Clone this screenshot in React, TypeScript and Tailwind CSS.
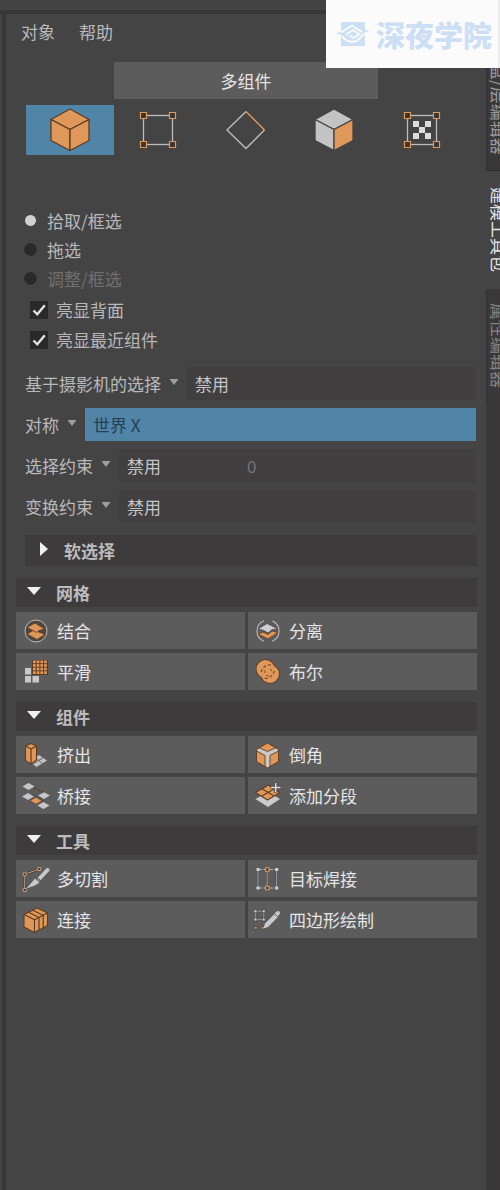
import { useState } from "react";
import type { ReactNode } from "react";

const ORANGE = "#e0985a";
const BROWN = "#5e3c22";
const GREY = "#bdbcbd";

function Cube({ front, side, line }: { front: string; side: string; line: string }) {
  return (
    <svg width="44" height="44" viewBox="0 0 44 44" stroke={line} strokeWidth="1.3" strokeLinejoin="round" aria-hidden="true">
      <path d="M22 1 L41 11.5 L22 21.5 L3 11.5 Z" fill={front} />
      <path d="M3 11.5 L22 21.5 V42.5 L3 32.5 Z" fill={front} />
      <path d="M41 11.5 L22 21.5 V42.5 L41 32.5 Z" fill={side} />
    </svg>
  );
}

function Frame({ checker }: { checker?: boolean }) {
  return (
    <svg width="44" height="44" viewBox="0 0 44 44" aria-hidden="true">
      <rect x="7.5" y="7.5" width="29" height="29" fill="none" stroke={GREY} strokeWidth="1.3" />
      {checker && (
        <path d="M13 13h6v6h-6z M25 13h6v6h-6z M19 19h6v6h-6z M13 25h6v6h-6z M25 25h6v6h-6z" fill="#dcdcdc" />
      )}
      <path
        d="M4.5 4.5h6v6h-6z M33.500 4.500h6v6h-6z M4.500 33.500h6v6h-6z M33.500 33.500h6v6h-6z"
        fill="#3a3432"
        stroke={ORANGE}
        strokeWidth="1.2"
      />
    </svg>
  );
}

function Diamond() {
  return (
    <svg width="44" height="44" viewBox="0 0 44 44" fill="none" strokeWidth="1.4" aria-hidden="true">
      <path d="M22 3.500 L3 22 L22 40.500 L40.500 22" stroke={GREY} />
      <path d="M22 3.500 L40.500 22" stroke={ORANGE} />
    </svg>
  );
}

function ToolSvg({ children }: { children: ReactNode }) {
  return (
    <svg className="shrink-0" width="28" height="28" viewBox="0 0 28 28" fill="none" strokeLinejoin="round" aria-hidden="true">
      {children}
    </svg>
  );
}

const icons = {
  combine: (
    <ToolSvg>
      <circle cx="14" cy="14" r="11" fill="#4d4844" stroke={GREY} strokeWidth="1" />
      <path d="M5 17 L12 13 L23 17.500 L15 22.500 Z" fill={ORANGE} stroke={BROWN} strokeWidth="0.8" />
      <path d="M5 10.500 L13 6 L22.500 12 L17 13.500 L14.500 15.500 L11 13.500 Z" fill={ORANGE} stroke={BROWN} strokeWidth="0.8" />
    </ToolSvg>
  ),
  separate: (
    <ToolSvg>
      <circle cx="14" cy="14" r="11" stroke={GREY} strokeWidth="1.1" strokeDasharray="26 8.560" strokeDashoffset="-21.500" />
      <path d="M4 17 L9 15 L14 17.500 L18 14 L24 15.500 L14 22 Z" fill={ORANGE} stroke={BROWN} strokeWidth="0.8" />
      <path d="M4 12 L13 6.500 L24 12 L18 12.500 L14 16 L10 13.500 Z" fill="#cfcdd2" stroke="#4b4a4b" strokeWidth="0.8" />
    </ToolSvg>
  ),
  smooth: (
    <ToolSvg>
      <path d="M10 2h16v15H10z" fill={BROWN} />
      {[0, 1, 2, 3].map((r) =>
        [0, 1, 2, 3].map((c) => (
          <rect key={`${r}-${c}`} x={11 + c * 3.7} y={2.5 + r * 3.6} width="2.700" height="2.700" fill={ORANGE} />
        )),
      )}
      <path d="M3 10h6v6.500H3z M3 18h6v6.500H3z M10.500 18h6.500v6.500h-6.500z" fill="#c9c8c9" />
    </ToolSvg>
  ),
  boolean: (
    <ToolSvg>
      <g stroke={BROWN} strokeWidth="1.8">
        <circle cx="11.500" cy="11" r="9" />
        <circle cx="16" cy="16" r="9" />
      </g>
      <circle cx="11.500" cy="11" r="9" fill={ORANGE} />
      <circle cx="16" cy="16" r="9" fill={ORANGE} />
      <path d="M20.300 13 A9 9 0 0 1 9 20 M7.200 14 A9 9 0 0 1 18.500 7.200" stroke="#7a4a25" strokeWidth="1.300" strokeDasharray="3 2" />
      <path d="M11 12v3 M16 11l2 2 M12 17l3 1" stroke="#96602f" strokeWidth="1.200" />
    </ToolSvg>
  ),
  extrude: (
    <ToolSvg>
      <path d="M7 20 L17 14 L25 19.500 L14.500 26 Z" fill="#c3c2c3" />
      <path d="M11 23 L21 16.800 M15.500 18 L20 22.500" stroke="#5b5a5b" strokeWidth="1" />
      <path d="M3.500 5 L9 2.500 L14.500 5 V19 L9 23 L3.500 19.500 Z" fill={ORANGE} stroke={BROWN} strokeWidth="1.1" />
      <path d="M3.500 5 L9 8 L14.500 5 M9 8 V23" stroke={BROWN} strokeWidth="1.2" />
    </ToolSvg>
  ),
  bridge: (
    <ToolSvg>
      <path d="M12 6 L22 10.500" stroke={BROWN} strokeWidth="1.3" strokeDasharray="2.500 1.500" />
      <path d="M9 12 L23 20" stroke="#4a4340" strokeWidth="1" />
      <g fill="#c6c6c8">
        <path d="M0.500 4.500 L6.500 1 L12.500 4.500 L6.500 8 Z" />
        <path d="M0 14.500 L6 11 L12 14.500 L6 18 Z" />
        <path d="M16 13.500 L22 10.300 L28 13.500 L22 17 Z" />
        <path d="M15.500 23.500 L21.500 20 L27.500 23.500 L21.500 27 Z" />
      </g>
      <path d="M8 18.700 L14 15.200 L20 18.700 L14 22.200 Z" fill={ORANGE} stroke={BROWN} strokeWidth="0.600" />
    </ToolSvg>
  ),
  bevel: (
    <ToolSvg>
      <path d="M13.500 2 L24.500 8.500 V20.500 L13.500 27 L2.500 20.500 V8.500 Z" fill="#c9c7c6" stroke={BROWN} strokeWidth="1" />
      <g fill={ORANGE} stroke={BROWN} strokeWidth="0.900">
        <path d="M13.500 2 L21.500 6.800 L13.500 10.500 L5.500 6.800 Z" />
        <path d="M2.500 10 L11 14.500 V25.500 L2.500 20.500 Z" />
        <path d="M24.500 10 L16 14.500 V25.500 L24.500 20.500 Z" />
      </g>
    </ToolSvg>
  ),
  addDivisions: (
    <ToolSvg>
      <path d="M1.500 17 L14 10 L26 17 L14 25 Z" fill="#cbcbcc" />
      <path d="M1.500 10.500 L14.500 3 L26 10.500 L13.500 18 Z" fill={ORANGE} stroke={BROWN} strokeWidth="1.1" />
      <path d="M8 6.800 L20 14 M7.500 14.200 L20.500 6.700" stroke={BROWN} strokeWidth="1.1" />
      <path d="M16.500 5.500h10.500 M21.700 0.500v10.500" stroke="#4a4744" strokeWidth="3.200" />
      <path d="M17 5.500h9.500 M21.700 1v9.500" stroke="#dededf" strokeWidth="1.500" />
    </ToolSvg>
  ),
  multiCut: (
    <ToolSvg>
      <path d="M2.700 25 V9.300 L17.300 4" stroke="#4b3a31" strokeWidth="2.400" />
      <path d="M2.700 25 V9.300 L17.300 4" stroke="#c99a80" strokeWidth="1" />
      <path d="M1.200 7.800h3v3h-3z M15.800 2.500h3v3h-3z M1.200 23.500h3v3h-3z" fill="#3f3733" stroke="#cfa58c" strokeWidth="0.900" />
      <path d="M25.500 5 L17.500 13.500" stroke="#c6c9c9" strokeWidth="4" strokeLinecap="round" />
      <path d="M4.500 23.500 L13 13.500 L17.500 17.500 C15 20 10 21.500 4.500 23.500 Z" fill="#c6c9c9" />
      <path d="M14.800 12.300 L19 16" stroke="#4d4c4d" strokeWidth="1" />
    </ToolSvg>
  ),
  connect: (
    <ToolSvg>
      <path d="M2 8.500 L15 2 L25.500 7 V19.500 L12.500 26.500 L2 21 Z" fill={ORANGE} stroke={BROWN} strokeWidth="1.1" />
      <path d="M2 8.500 L12.500 13.800 L25.500 7 M12.500 13.800 V26.500" stroke={BROWN} strokeWidth="1.2" />
      <path d="M6.500 6.300 L17 11.500 V24 M10.700 4.200 L21.200 9.300 V21.800" stroke={BROWN} strokeWidth="1.2" />
    </ToolSvg>
  ),
  targetWeld: (
    <ToolSvg>
      <path d="M4 4.500 V23 M22.700 4.500 V23" stroke="#3f4048" strokeWidth="2.200" />
      <path d="M4 4.500 V23 M22.700 4.500 V23" stroke="#a9abb8" strokeWidth="1" />
      <path d="M4 4.500 H22.700 M4 23 H22.700" stroke="#b9b9bc" strokeWidth="1" strokeDasharray="4 1.500" />
      <path d="M13.300 5 V23" stroke="#a87949" strokeWidth="1.300" />
      <path d="M2.500 3h3v3h-3z M21.200 3h3v3h-3z M2.500 21.500h3v3h-3z M21.200 21.500h3v3h-3z" fill="#cfcfd2" />
      <path d="M11.500 2.700h3.600v3.600h-3.600z M11.500 21.200h3.600v3.600h-3.600z" fill="#4b3d32" stroke={ORANGE} strokeWidth="1.1" />
    </ToolSvg>
  ),
  quadDraw: (
    <ToolSvg>
      <path d="M1.500 5.300h8.200v8.200H1.500z" stroke="#9b9a9b" strokeWidth="0.900" />
      <path d="M0 3.800h3v3H0z M8.200 3.800h3v3h-3z M0 12h3v3H0z M8.200 12h3v3h-3z" fill="#cfcfd0" stroke="#3e3d3e" strokeWidth="0.700" />
      <path d="M0.500 20.500h2.500v2.500H0.500z M7.500 20.500h2.500v2.500H7.500z" fill="#dba88c" stroke="#4b3a31" strokeWidth="0.700" />
      <path d="M9.500 22.500 L11 17.500 L21 7.500 L24.500 10.500 L14 21 Z" fill="#c9c8ca" />
      <path d="M22.500 8.500 L24 7" stroke="#c9c8ca" strokeWidth="4" strokeLinecap="round" />
      <path d="M20.200 7.500 L24.300 11.300" stroke="#5b5a5b" strokeWidth="0.900" />
    </ToolSvg>
  ),
};

const modes: { label: string; icon: ReactNode }[] = [
  { label: "对象选择", icon: <Cube front={ORANGE} side={ORANGE} line={BROWN} /> },
  { label: "顶点选择", icon: <Frame /> },
  { label: "边选择", icon: <Diamond /> },
  { label: "面选择", icon: <Cube front="#c4c3c4" side={ORANGE} line="#454445" /> },
  { label: "UV 选择", icon: <Frame checker /> },
];

const sections: { title: string; tools: { label: string; icon: ReactNode }[] }[] = [
  {
    title: "网格",
    tools: [
      { label: "结合", icon: icons.combine },
      { label: "分离", icon: icons.separate },
      { label: "平滑", icon: icons.smooth },
      { label: "布尔", icon: icons.boolean },
    ],
  },
  {
    title: "组件",
    tools: [
      { label: "挤出", icon: icons.extrude },
      { label: "倒角", icon: icons.bevel },
      { label: "桥接", icon: icons.bridge },
      { label: "添加分段", icon: icons.addDivisions },
    ],
  },
  {
    title: "工具",
    tools: [
      { label: "多切割", icon: icons.multiCut },
      { label: "目标焊接", icon: icons.targetWeld },
      { label: "连接", icon: icons.connect },
      { label: "四边形绘制", icon: icons.quadDraw },
    ],
  },
];

function Radio({ label, checked, disabled, onPick }: { label: string; checked: boolean; disabled?: boolean; onPick: () => void }) {
  return (
    <label className={`flex h-[29px] items-center gap-[10px] ${disabled ? "text-[#706f70]" : "text-[#b9b8b9]"}`}>
      <input
        type="radio"
        name="pick"
        checked={checked}
        disabled={disabled}
        onChange={onPick}
        className="size-[13px] shrink-0 appearance-none rounded-full border border-[#2e2d2e] bg-[#2b2a2b] checked:border-[#3a393a] checked:bg-[#d2d1d2]"
      />
      {label}
    </label>
  );
}

function Check({ label }: { label: string }) {
  return (
    <label className="flex h-[30px] items-center gap-2 text-[#b9b8b9]">
      <span className="grid size-[18px] shrink-0 place-items-center">
        <input type="checkbox" defaultChecked className="peer col-start-1 row-start-1 size-[18px] appearance-none bg-[#2a292a]" />
        <svg className="pointer-events-none invisible col-start-1 row-start-1 peer-checked:visible" width="16" height="16" viewBox="0 0 16 16" aria-hidden="true">
          <path d="M2.500 8.500 L6.300 12.300 L13.800 3.300" fill="none" stroke="#e4e3e4" strokeWidth="2.400" />
        </svg>
      </span>
      {label}
    </label>
  );
}

function Choice({ id, label, options, active, extra }: { id: string; label: string; options: string[]; active?: boolean; extra?: string }) {
  return (
    <div className="flex h-[33px] items-center text-[#b9b8b9]">
      <label htmlFor={id} className="flex shrink-0 items-center gap-2">
        {label}
        <svg className="mb-1" width="10" height="6" viewBox="0 0 10 6" aria-hidden="true">
          <path d="M0.500 0h9L5 6z" fill="#a09fa0" />
        </svg>
      </label>
      <select
        id={id}
        className={`ml-2 h-full min-w-0 appearance-none px-2 outline-none ${active ? "bg-[#5085a8] text-[#273f50]" : "bg-[#413f40] text-[#c6c5c6]"} ${extra ? "w-[120px]" : "flex-1"}`}
      >
        {options.map((o) => (
          <option key={o}>{o}</option>
        ))}
      </select>
      {extra && (
        <input aria-label={`${label}数值`} disabled defaultValue={extra} className="h-full min-w-0 flex-1 bg-[#413f40] px-2 text-[#767576]" />
      )}
    </div>
  );
}

function Tab({ label, className }: { label: string; className: string }) {
  return (
    <button
      type="button"
      className={`flex w-[25px] shrink-0 items-center [writing-mode:vertical-rl] [text-orientation:sideways] ${className}`}
    >
      <span className="whitespace-nowrap leading-[18px]">{label}</span>
    </button>
  );
}

function Toolkit() {
  const [pick, setPick] = useState(0);
  const [mode, setMode] = useState(0);
  return (
    <main className="min-w-0 flex-1 bg-[#454445]">
      <nav className="flex h-9 items-center gap-6 px-[15px] text-[#b9b8b9]">
        <button type="button">对象</button>
        <button type="button">帮助</button>
      </nav>

      <div className="mt-3 grid grid-cols-5 gap-y-[6px] pr-5 pl-5">
        <button type="button" className="col-span-3 col-start-2 h-[37px] bg-[#5d5c5d] text-[#e6e5e6]">
          多组件
        </button>
        {modes.map((m, i) => (
          <button
            key={m.label}
            type="button"
            aria-label={m.label}
            aria-pressed={mode === i}
            onClick={() => setMode(i)}
            className={`flex h-[50px] items-center justify-center ${i === 0 ? "col-start-1" : ""} ${mode === i ? "bg-[#5085a8]" : ""}`}
          >
            {m.icon}
          </button>
        ))}
      </div>

      <div className="mt-[51px] flex flex-col items-start pl-[18px]">
        <Radio label="拾取/框选" checked={pick === 0} onPick={() => setPick(0)} />
        <Radio label="拖选" checked={pick === 1} onPick={() => setPick(1)} />
        <Radio label="调整/框选" checked={pick === 2} disabled onPick={() => setPick(2)} />
      </div>
      <div className="mt-[2px] flex flex-col items-start pl-6">
        <Check label="亮显背面" />
        <Check label="亮显最近组件" />
      </div>

      <div className="mt-3 flex flex-col gap-2 pr-[10px] pl-[19px]">
        <Choice id="camera" label="基于摄影机的选择" options={["禁用", "启用"]} />
        <Choice id="symmetry" label="对称" options={["世界 X", "世界 Y", "世界 Z"]} active />
        <Choice id="select-constraint" label="选择约束" options={["禁用", "角度"]} extra="0" />
        <Choice id="transform-constraint" label="变换约束" options={["禁用", "边"]} />
      </div>

      <div className="mt-3 pr-[9px] pl-[19px]">
        <button type="button" aria-expanded="false" className="flex h-[31px] w-full items-center gap-4 bg-[#3d3b3c] pl-[15px] font-bold text-[#bdbcbd]">
          <svg className="mb-1" width="8" height="14" viewBox="0 0 8 14" aria-hidden="true">
            <path d="M0 0l8 7-8 7z" fill="#f0f0f0" />
          </svg>
          软选择
        </button>
      </div>

      <div className="mt-3 flex flex-col gap-3 pr-[9px] pl-[10px]">
        {sections.map((s) => (
          <section key={s.title}>
            <button type="button" aria-expanded="true" className="flex h-[29px] w-full items-center gap-[15px] bg-[#3d3b3c] pl-[11px] font-bold text-[#bdbcbd]">
              <svg className="mb-1" width="14" height="8" viewBox="0 0 14 8" aria-hidden="true">
                <path d="M0 0h14L7 8z" fill="#f0f0f0" />
              </svg>
              {s.title}
            </button>
            <div className="mt-[5px] grid grid-cols-2 gap-x-[3px] gap-y-1">
              {s.tools.map((t) => (
                <button key={t.label} type="button" className="flex h-[37px] items-center gap-[7px] bg-[#5d5c5d] pl-[6px] text-[#e6e5e6]">
                  {t.icon}
                  {t.label}
                </button>
              ))}
            </div>
          </section>
        ))}
      </div>
    </main>
  );
}

export default function App() {
  return (
    <div className="relative flex min-h-screen flex-col overflow-hidden bg-[#444344] font-['Noto_Sans_CJK_SC',sans-serif] text-[17px] leading-6">
      <div className="h-[10px]" />
      <div className="h-1 bg-[#383738]" />
      <div className="flex flex-1">
        <div className="w-[6px] border-r-4 border-[#383738]" />
        <Toolkit />
        <aside className="flex w-[14px] shrink-0 flex-col overflow-hidden bg-[#3a3839]">
          <Tab label="通道盒/层编辑器" className="h-[157px] justify-end border-b border-l border-[#302f30] pb-[15px] text-[#9b9a9b]" />
          <Tab label="建模工具包" className="h-[118px] justify-start bg-[#454445] pt-4 text-[#e6e5e6]" />
          <Tab label="属性编辑器" className="h-[114px] justify-start border-y border-l border-[#302f30] pt-[14px] text-[#848384]" />
        </aside>
      </div>

      <div className="absolute top-0 right-0 flex h-[68px] w-[174px] items-center gap-[6px] border-r-2 border-[#ececec] bg-[#fbfbfb] pl-[10px] text-[#cddff4]">
        <svg className="shrink-0" width="34" height="26" viewBox="0 0 34 26" aria-hidden="true">
          <path d="M5 1h24v24H5z" fill="#cddff4" />
          <path d="M5 11.500 L16 4.500 L26 11" fill="none" stroke="#fbfbfb" strokeWidth="1.800" />
          <path d="M10 13.500 L17 9 L23.500 13 L17.500 17 L13.500 14.500" fill="none" stroke="#fbfbfb" strokeWidth="1.600" />
          <path d="M6 15 C11 22 20 23 25 16 C27 13 29 11.500 34 11.500" fill="none" stroke="#fbfbfb" strokeWidth="2" />
          <path d="M0 12.500 L5 10.500 V14 Z M29 9 L33.500 10 L29 11.500 Z" fill="#cddff4" />
        </svg>
        <span className="text-[29px] leading-none font-black whitespace-nowrap">深夜学院</span>
      </div>
    </div>
  );
}
